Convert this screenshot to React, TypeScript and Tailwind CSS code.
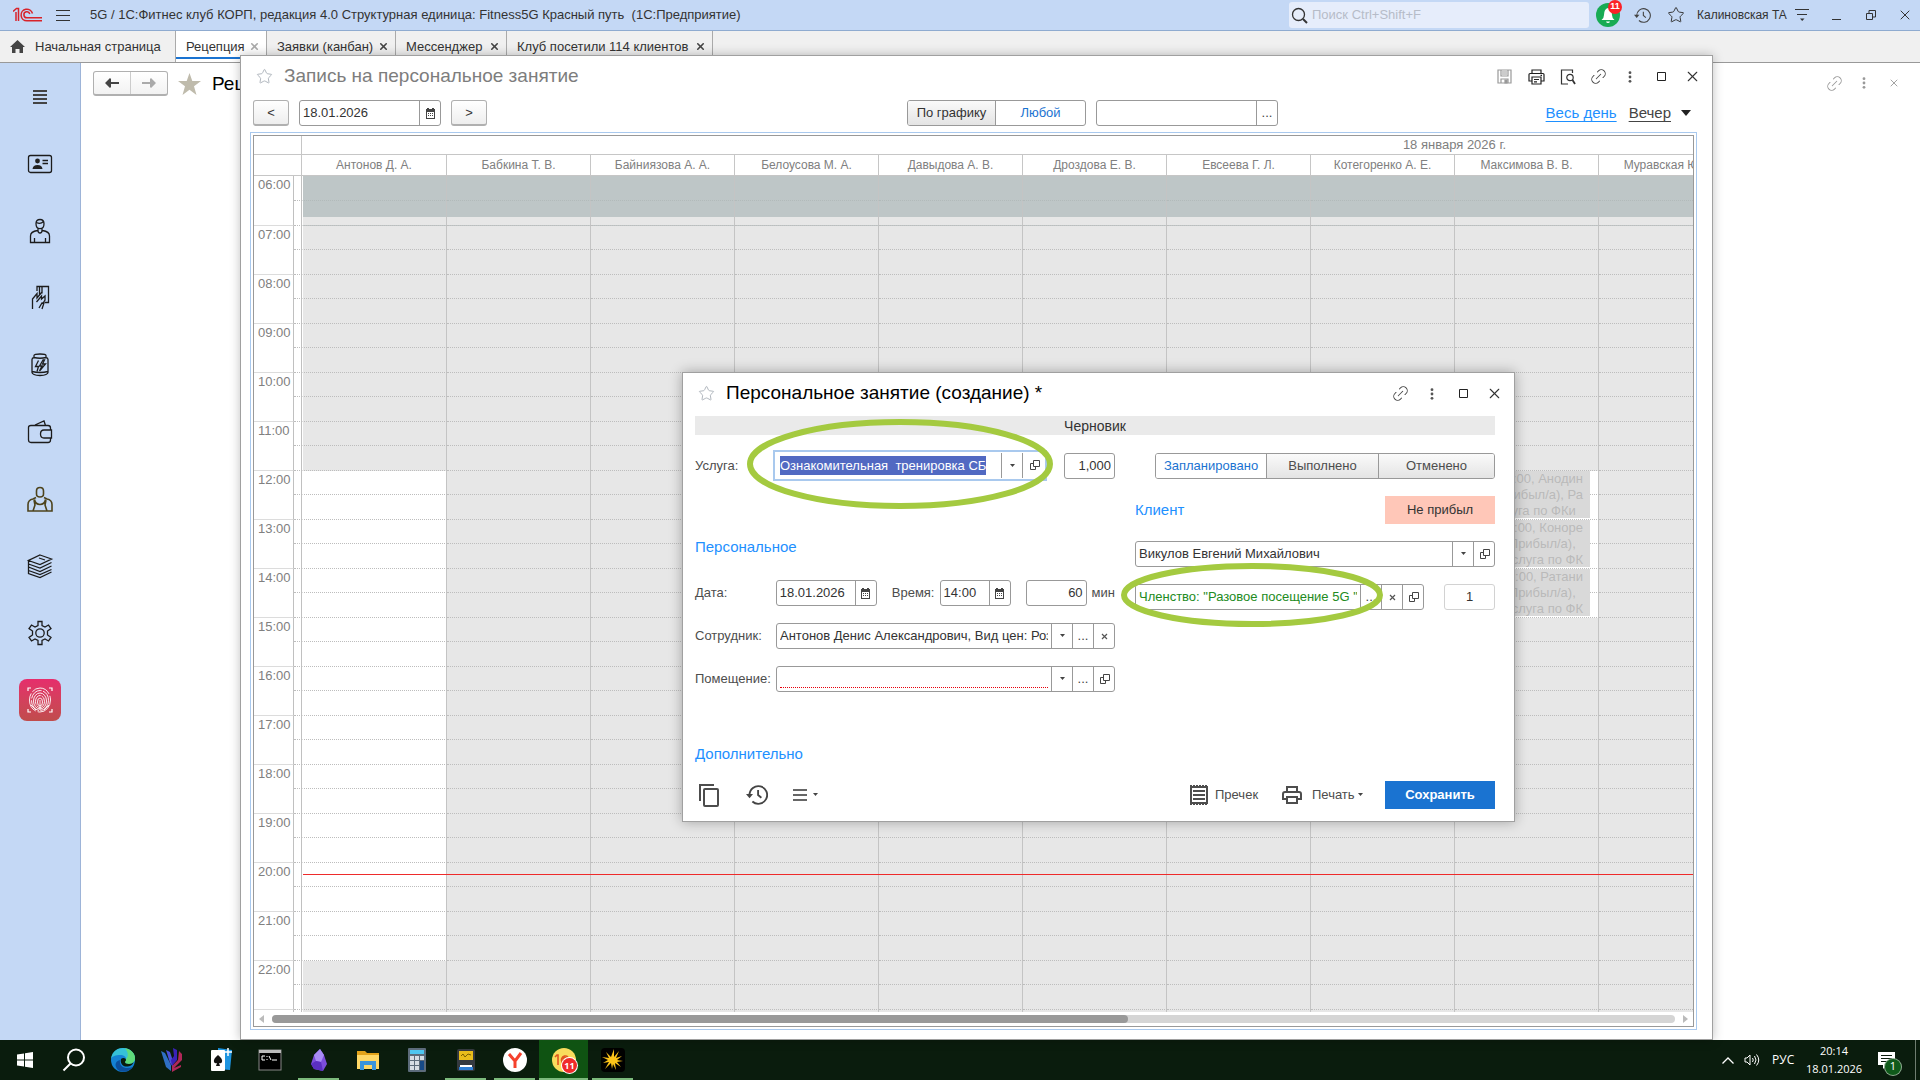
import { useEffect, useRef, useState } from 'react'
import type { ReactNode } from 'react'
import { Link2, Star, X } from 'lucide-react'

interface Visit {
  hour: number
  lines: string[]
}

const STAFF = [
  'Антонов Д. А.',
  'Бабкина Т. В.',
  'Байниязова А. А.',
  'Белоусова М. А.',
  'Давыдова А. В.',
  'Дроздова Е. В.',
  'Евсеева Г. Л.',
  'Котегоренко А. Е.',
  'Максимова В. В.',
  'Муравская Ю. А.',
  '',
  '',
  '',
  '',
  '',
  '',
]

const HOURS = Array.from({ length: 18 }, (_, i) => i + 6)

const VISITS: Visit[] = [
  { hour: 12, lines: ['12:00-13:00, Анодин', '(Прибыл/а), Ра', 'услуга по ФКи\u00a0\u00a0'] },
  { hour: 13, lines: ['13:00-14:00, Коноре', '(Прибыл/а),\u00a0\u00a0', 'услуга по ФК'] },
  { hour: 14, lines: ['14:00-15:00, Ратани', '(Прибыл/а),\u00a0\u00a0', 'услуга по ФК'] },
]

const TABS = [
  { title: 'Рецепция', active: true, width: 'w-[91px]' },
  { title: 'Заявки (канбан)', active: false, width: 'w-[129px]' },
  { title: 'Мессенджер', active: false, width: 'w-[111px]' },
  { title: 'Клуб посетили 114 клиентов', active: false, width: 'w-[206px]' },
]

/* ---------- icons ---------- */

function CalendarIcon() {
  return (
    <svg width="11" height="11" viewBox="0 0 11 11" fill="#444">
      <path d="M1 1h1V0h2v1h3V0h2v1h1v10H1zM2 4v6h7V4z" fillRule="evenodd" />
      <path d="M3 5h1v1H3zM5 5h1v1H5zM7 5h1v1H7zM3 7h1v1H3zM5 7h1v1H5zM7 7h1v1H7z" />
    </svg>
  )
}

function OpenIcon() {
  return (
    <svg width="11" height="11" viewBox="0 0 11 11" fill="none" stroke="#444">
      <path d="M4.500.5h6v6h-6z" />
      <path d="M4 3.500H1.500v6h5V7" />
    </svg>
  )
}

function Caret() {
  return (
    <svg width="7" height="4" viewBox="0 0 7 4" fill="#444">
      <path d="M1 0h5L3.500 3z" />
    </svg>
  )
}

function CrossIcon() {
  return (
    <svg width="7" height="7" viewBox="0 0 7 7" stroke="#555" strokeWidth="1.200">
      <path d="M1 1l5 5M6 1L1 6" />
    </svg>
  )
}

function DotsIcon({ color }: { color: string }) {
  return (
    <svg width="4" height="12" viewBox="0 0 4 12" fill={color}>
      <circle cx="2" cy="1.700" r="1.400" />
      <circle cx="2" cy="6" r="1.400" />
      <circle cx="2" cy="10.300" r="1.400" />
    </svg>
  )
}

function SquareIcon() {
  return (
    <svg width="10" height="10" viewBox="0 0 10 10" fill="none" stroke="#222">
      <path d="M.5.5h8v8h-8z" />
    </svg>
  )
}

function HistoryIcon({ size, stroke }: { size: number; stroke: number }) {
  return (
    <svg width={size} height={size} viewBox="0 0 20 20" fill="none" stroke="#444" strokeWidth={stroke}>
      <path d="M3.200 10a8 8 0 1 1 2.600 5.900" />
      <path d="M11 5.500V10l3 2.500" />
      <path d="M0 9.200h6.400L3.200 13z" fill="#444" stroke="none" />
    </svg>
  )
}

function Logo1C() {
  return (
    <svg width="30" height="16" viewBox="0 0 30 16" fill="none" stroke="#d8232a" strokeWidth="1.500">
      <path d="M0 4.500L3.500 1.500H5.500V14M3 5v9" />
      <path d="M19.500 6.500A5.800 5.800 0 1 0 14 13.800H29" />
      <path d="M16.800 7A3 3 0 1 0 14 10.800H29" />
    </svg>
  )
}

function PrinterIcon() {
  return (
    <svg width="17" height="16" viewBox="0 0 17 16" fill="none" stroke="#222" strokeWidth="1.200">
      <path d="M4 4V1h9v3M4 12H1V5.500Q1 4.500 2 4.500H15Q16 4.500 16 5.500V12H13" />
      <path d="M4 8h9v7H4zM6 10.500h5M6 12.800h3M12.500 6.300h1.500" />
    </svg>
  )
}

const sideIcons: { name: string; icon: ReactNode }[] = [
  {
    name: 'Меню',
    icon: <path d="M7 8h14M7 12h14M7 16h14M7 20h14" strokeWidth="2" stroke="#444" />,
  },
  {
    name: 'Карта клиента',
    icon: (
      <>
        <rect x="2.500" y="5.500" width="23" height="17" rx="2" />
        <circle cx="11.500" cy="11" r="2.400" fill="#222" stroke="none" />
        <path d="M6.500 19q.5-4 5-4t5 4z" fill="#222" stroke="none" />
        <path d="M16.500 10.500h5.500M16.500 13.500h5.500" />
      </>
    ),
  },
  {
    name: 'Клиенты',
    icon: (
      <>
        <path d="M10 6.500q0-4 4-4t4 4.200c0 3-1.500 5-4 5s-4-2-4-5.200zM10.500 5.500q4 2 7-1" />
        <path d="M12 11.500v2q0 2.500 2 2.500t2-2.500v-2M11.500 13.500Q4.500 14.500 4.500 19v6.500h19V19q0-4.500-7-5.500M8.500 25v-4M19.500 25v-4" />
      </>
    ),
  },
  {
    name: 'Продажа карт',
    icon: (
      <path d="M11 7V2.500h11.500v16H19M13.500 2.500v9M16 2.500v7M6.500 25V15L11 9.500V14l5-6M10.500 18l5-6v3l3.500-3v4l-2.500 4M13 24l3-5 2 0-2 6" />
    ),
  },
  {
    name: 'Товары',
    icon: (
      <>
        <path d="M6 8.500q0-1.500 2-2V4.500q0-1.500 6-1.500t6 1.500v2q2 .5 2 2v13q0 1-2 2-2 1-6 1t-6-1q-2-1-2-2zM8 6.500q6 1.500 12 0M6 20.500q8 2 16 0" />
        <path d="M12.500 9.500l-3 6h3l-1.500 5M17 9l-3.500 6H16l-2.500 5 6-7h-3l2-4z" />
      </>
    ),
  },
  {
    name: 'Касса',
    icon: (
      <path d="M5 7.500h17q2.500 0 2.500 2.500v2M24.500 19.500V22q0 2.500-2.500 2.500H5Q2.500 24.500 2.500 22V9.500Q2.500 7.500 5 7.500M9 7l9-4 1.500 4.500M25.500 12H18q-3.500 0-3.500 4t3.500 4h7.500z" />
    ),
  },
  {
    name: 'Сотрудники',
    icon: (
      <>
        <path d="M10.500 6q0-3.500 3.500-3.500T17.500 6v3q0 3-3.500 3t-3.500-3z" strokeWidth="1.600" stroke="#4d431c" />
        <path
          d="M10 12.500L7 14q-5 1-5 5.500V26h24v-6.500Q26 15 21 14l-3-1.500M8.500 14.500q1 5 5.500 5t5.500-5M8 15l1 5-2 6M20 15l-1 5 2 6"
          strokeWidth="1.600"
          stroke="#4d431c"
        />
      </>
    ),
  },
  {
    name: 'Отчеты',
    icon: (
      <path d="M14 3l11.500 4L14 12.500 2.500 8.500zM2.500 8.500v13l11.500 4 11.500-5.500M2.500 12l11.500 4L25.500 10.500M2.500 15l11.500 4.500L25.500 14M2.500 18.500l11.500 4L25.500 17.500M13 6l6 2" />
    ),
  },
  {
    name: 'Настройки',
    icon: (
      <>
        <path d="M12 2.500h4v4l3 1.500 3.500-2 2.500 3.500-3.500 2.500v4l3.500 2.500-2.500 3.500-3.500-2-3 1.500v4h-4v-4l-3-1.500-3.500 2L3 18.500 6.500 16v-4L3 9.500 5.500 6 9 8l3-1.500z" />
        <circle cx="14" cy="14" r="4.200" />
      </>
    ),
  },
]

function Fingerprint() {
  return (
    <button
      type="button"
      aria-label="Отпечаток"
      className="flex size-[42px] items-center justify-center rounded-lg bg-linear-to-b from-[#e62d6c] to-[#c04c4c]"
    >
      <svg width="26" height="26" viewBox="0 0 26 26" fill="none" stroke="#fff">
        <path d="M1 4V1h3M22 1h3v3M25 22v3h-3M4 25H1v-3" strokeWidth="1.200" />
        <g strokeWidth=".9">
          <ellipse cx="13" cy="13" rx="10.500" ry="12" strokeDasharray="20 2" />
          <ellipse cx="13" cy="13.500" rx="8.500" ry="10" strokeDasharray="14 1.500" />
          <ellipse cx="13" cy="14" rx="6.500" ry="8" />
          <ellipse cx="13" cy="14.500" rx="4.500" ry="6" strokeDasharray="12 1" />
          <ellipse cx="13" cy="15" rx="2.500" ry="4" />
          <path d="M13 13v10M4 18l5 5M22 18l-5 5" />
        </g>
      </svg>
    </button>
  )
}

/* ---------- small controls ---------- */

interface FieldProps {
  id: string
  label?: string
  value: string
  width: string
  buttons?: { name: string; icon: ReactNode }[]
  inputClass?: string
  borderClass?: string
}

function Field({ id, label, value, width, buttons = [], inputClass = '', borderClass = 'border-[#999]' }: FieldProps) {
  const [text, setText] = useState(value)
  return (
    <div className={`flex h-[26px] shrink-0 overflow-hidden rounded-[3px] border bg-white ${borderClass} ${width}`}>
      <input
        id={id}
        aria-label={label}
        value={text}
        onChange={(e) => setText(e.target.value)}
        className={`w-0 min-w-0 flex-1 px-[3px] outline-none ${inputClass}`}
      />
      {buttons.map((b) => (
        <button
          key={b.name}
          type="button"
          aria-label={b.name}
          className="flex w-[21px] items-center justify-center border-l border-[#999] text-[#444]"
        >
          {b.icon}
        </button>
      ))}
    </div>
  )
}

const calendarBtn = { name: 'Календарь', icon: <CalendarIcon /> }
const caretBtn = { name: 'Показать список', icon: <Caret /> }
const pickBtn = { name: 'Выбрать', icon: <span>...</span> }
const clearBtn = { name: 'Очистить', icon: <CrossIcon /> }
const openBtn = { name: 'Открыть', icon: <OpenIcon /> }

function WindowButtons() {
  return (
    <>
      <button type="button" aria-label="Ссылка" className="flex w-[31px] justify-center">
        <Link2 size={19} strokeWidth={1.2} color="#444" className="-rotate-45" />
      </button>
      <button type="button" aria-label="Ещё" className="flex w-8 justify-center">
        <DotsIcon color="#555" />
      </button>
      <button type="button" aria-label="Развернуть" className="flex w-[31px] justify-center">
        <SquareIcon />
      </button>
      <button type="button" aria-label="Закрыть" className="flex w-[31px] justify-center">
        <X size={17} strokeWidth={1.5} color="#333" />
      </button>
    </>
  )
}

/* ---------- page parts ---------- */

function TitleBar() {
  return (
    <header className="flex h-[31px] shrink-0 items-center border-b border-[#8fabd0] bg-[#c4d8f5] text-[#333]">
      <div className="flex w-[90px] items-center gap-[13px] pl-[13px]">
        <Logo1C />
        <svg width="14" height="13" viewBox="0 0 14 13" stroke="#333" strokeWidth="1.200">
          <path d="M0 1.500h14M0 6.500h14M0 11.500h14" />
        </svg>
      </div>
      <div className="whitespace-pre text-[13px]">
        5G / 1С:Фитнес клуб КОРП, редакция 4.0 Структурная единица: Fitness5G Красный путь{'  '}(1С:Предприятие)
      </div>
      <div className="ml-auto flex h-[26px] w-[300px] items-center gap-1 rounded-[3px] bg-[#e6edfb] px-[2px]">
        <svg width="17" height="17" viewBox="0 0 17 17" fill="none" stroke="#333" strokeWidth="1.300">
          <circle cx="7.500" cy="7.500" r="6" />
          <path d="M12 12l4 4" strokeWidth="2" />
        </svg>
        <input
          aria-label="Поиск"
          placeholder="Поиск Ctrl+Shift+F"
          className="flex-1 text-[13px] outline-none placeholder:text-[#b6bcc8]"
        />
      </div>
      <button type="button" aria-label="Уведомления" className="relative ml-[7px] size-6 rounded-full bg-[#18ab54]">
        <svg width="24" height="24" viewBox="0 0 24 24" fill="#fff">
          <path d="M12 5q4 1 4 7 0 3 2.500 5h-13Q8 15 8 12q0-6 4-7zM10 18.500h4q-.5 1.500-2 1.500t-2-1.500z" />
        </svg>
        <span className="absolute -top-[3px] left-3 flex size-[14px] items-center justify-center rounded-full bg-[#fb2127] text-[9px] font-bold text-white">
          11
        </span>
      </button>
      <button type="button" aria-label="История" className="ml-3.5">
        <HistoryIcon size={17} stroke={1.3} />
      </button>
      <button type="button" aria-label="Избранное" className="ml-4">
        <Star size={18} strokeWidth={1.3} />
      </button>
      <span className="ml-3 w-[85px] text-[12px] whitespace-nowrap">Калиновская ТА</span>
      <button type="button" aria-label="Настройка" className="ml-3">
        <svg width="16" height="14" viewBox="0 0 16 14" stroke="#333" strokeWidth="1.200">
          <path d="M1 1.500h14M3 6.500h10" />
          <path d="M6 10.500h4.500L8.200 13z" fill="#333" stroke="none" />
        </svg>
      </button>
      <button type="button" aria-label="Свернуть" className="ml-[22px] h-[10px] w-[9px] border-b border-[#333]" />
      <button type="button" aria-label="Восстановить" className="ml-[25px]">
        <svg width="10" height="10" viewBox="0 0 10 10" fill="none" stroke="#333">
          <path d="M.5 3.500h6v6h-6zM3 3V.5h6.500V7H7" />
        </svg>
      </button>
      <button type="button" aria-label="Закрыть" className="mr-[7px] ml-[21px]">
        <X size={16} strokeWidth={1.5} />
      </button>
    </header>
  )
}

function Tabs() {
  return (
    <nav className="flex h-8 shrink-0 border-b border-[#999] bg-[#f0f0f0] text-[13px] text-[#333]">
      <button type="button" className="flex w-[176px] items-center gap-2.5 border-r border-[#aaa] pl-2.5 whitespace-nowrap">
        <svg width="15" height="14" viewBox="0 0 15 14" fill="#444">
          <path d="M7.500 0L15 7h-2v6H9.500V9h-4v4H2V7H0z" />
        </svg>
        Начальная страница
      </button>
      {TABS.map((t) => (
        <div
          key={t.title}
          className={`flex items-center justify-between border-r border-[#aaa] pr-[6px] pl-2.5 whitespace-nowrap ${t.width} ${
            t.active ? 'bg-white shadow-[inset_0_-3px_0_#fff,inset_0_-5px_0_#1a73d1]' : ''
          }`}
        >
          <button type="button">{t.title}</button>
          <button type="button" aria-label="Закрыть вкладку">
            <X size={11} strokeWidth={3.5} color={t.active ? '#aaa' : '#444'} />
          </button>
        </div>
      ))}
    </nav>
  )
}

function Sidebar() {
  return (
    <aside className="flex w-[81px] shrink-0 flex-col items-center gap-[39px] border-r border-[#9db4d8] bg-[#c4d8f5] pt-5">
      {sideIcons.map((s) => (
        <button key={s.name} type="button" aria-label={s.name}>
          <svg width="28" height="28" viewBox="0 0 28 28" fill="none" stroke="#1c1c1c" strokeWidth="1.300">
            {s.icon}
          </svg>
        </button>
      ))}
      <div className="-mt-[7px]">
        <Fingerprint />
      </div>
    </aside>
  )
}

function cellTone(col: number, hour: number, half: number) {
  if (hour === 6) {
    return half === 0
      ? 'bg-[#bec6c7] border-b-[#b2baba]'
      : 'bg-[linear-gradient(#bec6c7_16px,#e7e7e7_16px)] border-b-[#bdbdbd]'
  }
  if (col === 0 && hour >= 12 && hour < 22) return 'bg-white border-b-[#bdbdbd]'
  if (col === 8 && hour >= 12 && hour < 15) return 'bg-white border-b-[#bdbdbd]'
  return 'bg-[#e7e7e7] border-b-[#bdbdbd]'
}

function Schedule() {
  return (
    <div className="mt-1 mr-[15px] mb-[9px] ml-[9px] flex min-h-0 flex-1 border border-[#a9c9ee] p-[2px]">
      <div className="relative flex min-h-0 w-0 flex-1 flex-col border border-[#999]">
        <div className="min-h-0 flex-1 overflow-hidden">
          <table className="w-[2353px] table-fixed border-separate border-spacing-0 text-[#808080]">
            <colgroup>
              <col className="w-[40px]" />
              <col className="w-[8px]" />
              <col className="w-[145px]" />
              {STAFF.slice(1).map((_, i) => (
                <col key={i} className="w-[144px]" />
              ))}
            </colgroup>
            <thead className="text-[12px]">
              <tr className="h-[19px]">
                <th colSpan={2} className="border-r border-b border-[#c6c6c6] p-0" />
                <th colSpan={16} className="border-b border-[#c6c6c6] p-0 text-[13px] leading-[18px] font-normal">
                  18 января 2026 г.
                </th>
              </tr>
              <tr className="h-[21px]">
                <th colSpan={2} className="border-r border-b border-[#c6c6c6] p-0" />
                {STAFF.map((name, i) => (
                  <th key={i} className="border-r border-b border-[#c6c6c6] p-0 leading-5 font-normal">
                    {name}
                  </th>
                ))}
              </tr>
            </thead>
            <tbody>
              {HOURS.map((hour) =>
                [0, 1].map((half) => (
                  <tr key={`${hour}-${half}`} className={half === 0 && hour !== 6 ? 'h-[24px]' : 'h-[25px]'}>
                    {half === 0 && (
                      <th
                        rowSpan={2}
                        className="border-r border-b border-r-[#c0c0c0] border-b-[#dcdcdc] p-0 pt-px pl-1 text-left align-top text-[13px] leading-4 font-normal"
                      >
                        {hour < 23 && `${String(hour).padStart(2, '0')}:00`}
                      </th>
                    )}
                    <td className="border-r border-b border-r-[#c0c0c0] border-b-[#bdbdbd] p-0 [border-bottom-style:dotted]" />
                    {STAFF.map((_, col) => (
                      <td
                        key={col}
                        className={`relative border-r border-b border-r-[#c4c4c4] p-0 [border-bottom-style:dotted] ${
                          col === 0 ? 'border-l border-l-white' : ''
                        } ${cellTone(col, hour, half)}`}
                      >
                        {col === 8 &&
                          half === 0 &&
                          VISITS.filter((v) => v.hour === hour).map((v) => (
                            <div
                              key={v.hour}
                              className="absolute top-0 left-0 z-10 h-[47px] w-[135px] overflow-hidden bg-[#d9d9d9] pr-[7px] text-right text-[13px] leading-4 whitespace-nowrap text-[#bababa]"
                            >
                              {v.lines.map((l) => (
                                <div key={l}>{l}</div>
                              ))}
                            </div>
                          ))}
                      </td>
                    ))}
                  </tr>
                ))
              )}
            </tbody>
          </table>
        </div>
        {/* current time */}
        <div className="absolute top-[738px] right-0 left-[49px] h-px bg-[#ee2b2b]" />
        <div className="flex h-[14px] shrink-0 items-center gap-2 px-[5px]">
          <svg width="5" height="8" viewBox="0 0 5 8" fill="#bbb">
            <path d="M5 0v8L0 4z" />
          </svg>
          <div className="h-2 flex-1 rounded-full bg-[#d5d5d5]">
            <div className="h-2 w-[61%] rounded-full bg-[#999]" />
          </div>
          <svg width="5" height="8" viewBox="0 0 5 8" fill="#bbb">
            <path d="M0 0v8l5-4z" />
          </svg>
        </div>
      </div>
    </div>
  )
}

function BookingWindow() {
  return (
    <section className="absolute top-6 right-[207px] bottom-0 left-60 isolate flex flex-col border border-[#a0a0a0] bg-white shadow-[0_0_10px_rgba(0,0,0,0.25)]">
      <div className="flex h-[41px] shrink-0 items-center pr-1 pl-[15px]">
        <Star size={17} strokeWidth={1.3} color="#aab0b8" />
        <h2 className="ml-[11px] text-[19px] text-[#7d7d7d]">Запись на персональное занятие</h2>
        <button type="button" aria-label="Сохранить" className="ml-auto flex w-8 justify-center">
          <svg width="15" height="15" viewBox="0 0 15 15" fill="none" stroke="#999" strokeWidth="1.200">
            <path d="M1 1h13v13H1zM4 1v6h7V1M5 3h5M5 5h5M4 14v-4h7v4" />
            <path d="M8 11h2v3H8z" fill="#999" />
          </svg>
        </button>
        <button type="button" aria-label="Печать" className="flex w-8 justify-center">
          <PrinterIcon />
        </button>
        <button type="button" aria-label="Просмотр" className="flex w-[31px] justify-center">
          <svg width="16" height="16" viewBox="0 0 16 16" fill="none" stroke="#333" strokeWidth="1.200">
            <path d="M12.500 4V1h-11v14H8" />
            <circle cx="10" cy="8.500" r="3.200" />
            <path d="M12.500 11l2.500 4" strokeWidth="1.800" />
          </svg>
        </button>
        <WindowButtons />
      </div>
      <div className="flex h-8 shrink-0 items-center gap-2.5 pr-[21px] pl-3 text-[13px] text-[#333]">
        <button
          type="button"
          aria-label="Предыдущий день"
          className="h-[26px] w-9 rounded-[3px] border border-b-2 border-[#b0b0b0] bg-linear-to-b from-white to-[#eee]"
        >
          &lt;
        </button>
        <Field id="day" label="Дата записи" value="18.01.2026" width="w-[142px]" buttons={[calendarBtn]} />
        <button
          type="button"
          aria-label="Следующий день"
          className="h-[26px] w-9 rounded-[3px] border border-b-2 border-[#b0b0b0] bg-linear-to-b from-white to-[#eee]"
        >
          &gt;
        </button>
        <div className="ml-[410px] flex h-[26px] w-[179px] overflow-hidden rounded-[3px] border border-[#999]">
          <button type="button" className="w-[88px] border-r border-[#999] bg-linear-to-b from-[#fafafa] to-[#e4e4e4]">
            По графику
          </button>
          <button type="button" className="flex-1 text-[#1a73d1]">
            Любой
          </button>
        </div>
        <Field id="filter" label="Отбор" value="" width="w-[182px]" buttons={[pickBtn]} />
        <div className="ml-auto flex items-center text-[15px]">
          <a href="#day" className="text-[#1e90ff] underline underline-offset-3">
            Весь день
          </a>
          <a href="#evening" className="ml-3 text-[#444] underline underline-offset-3">
            Вечер
          </a>
          <svg width="10" height="6" viewBox="0 0 10 6" className="ml-2.5" fill="#222">
            <path d="M0 0h10L5 6z" />
          </svg>
        </div>
      </div>
      <div className="-mt-px flex min-h-0 flex-1">
        <Schedule />
      </div>
    </section>
  )
}

function ServiceField() {
  const [service, setService] = useState('Ознакомительная  тренировка СБ')
  const ref = useRef<HTMLInputElement>(null)

  useEffect(() => {
    ref.current?.focus()
    ref.current?.select()
  }, [])

  return (
    <div className="flex h-[31px] w-[274px] border-2 border-[#a9c9ee] bg-white py-px">
      <input
        id="service"
        ref={ref}
        value={service}
        onChange={(e) => setService(e.target.value)}
        className="w-0 flex-1 pl-[5px] outline-none selection:bg-[#5169c2] selection:text-white"
      />
      <button
        type="button"
        aria-label="Показать список"
        className="flex w-[21px] items-center justify-center border-l border-[#999]"
      >
        <Caret />
      </button>
      <button
        type="button"
        aria-label="Открыть"
        className="flex w-[23px] items-center justify-center border-l border-[#999]"
      >
        <OpenIcon />
      </button>
    </div>
  )
}

function Mark({ className, w, h }: { className: string; w: number; h: number }) {
  return (
    <svg className={`pointer-events-none absolute ${className}`} width={w} height={h} fill="none">
      <ellipse cx={w / 2} cy={h / 2} rx={w / 2 - 3} ry={h / 2 - 3} stroke="#a4ca40" strokeWidth="6" />
    </svg>
  )
}

function SessionDialog() {
  const [status, setStatus] = useState('Запланировано')
  const statuses = [
    { name: 'Запланировано', width: 'w-[110px]' },
    { name: 'Выполнено', width: 'w-[112px] border-l' },
    { name: 'Отменено', width: 'flex-1 border-l' },
  ]

  return (
    <form className="absolute top-[341px] left-[682px] w-[833px] border border-[#a0a0a0] bg-white pr-[19px] pb-3 pl-3 text-[13px] text-[#4d4d4d] shadow-[0_0_12px_rgba(0,0,0,0.3)]">
      <div className="-mr-[15px] flex h-[41px] items-center">
        <Star size={17} strokeWidth={1.3} color="#aab0b8" className="ml-[3px]" />
        <h2 className="mr-auto ml-[11px] text-[19px] text-black">Персональное занятие (создание) *</h2>
        <WindowButtons />
      </div>
      <div className="mt-[2px] h-[19px] bg-[#eaeaea] text-center text-[14px] leading-5 text-[#333]">Черновик</div>

      <div className="mt-[15px] flex h-[31px] items-center">
        <label htmlFor="service" className="w-[78px]">
          Услуга:
        </label>
        <div className="text-[#333]">
          <ServiceField />
        </div>
        <div className="ml-[17px] text-[#333]">
          <Field id="count" label="Количество" value="1,000" width="w-[51px]" inputClass="text-right" />
        </div>
        <div className="ml-auto flex h-[26px] w-[340px] overflow-hidden rounded-[3px] border border-[#999]">
          {statuses.map((s) => (
            <button
              key={s.name}
              type="button"
              onClick={() => setStatus(s.name)}
              className={`border-[#999] ${s.width} ${
                status === s.name ? 'bg-white text-[#1a73d1]' : 'bg-linear-to-b from-[#fafafa] to-[#e4e4e4]'
              }`}
            >
              {s.name}
            </button>
          ))}
        </div>
      </div>

      <div className="flex gap-5">
        <div className="w-[420px]">
          <h3 className="mt-[54px] text-[15px] leading-6 text-[#1e90ff]">Персональное</h3>
          <div className="mt-[21px] flex items-center">
            <label htmlFor="date" className="w-[81px]">
              Дата:
            </label>
            <Field id="date" value="18.01.2026" width="w-[101px]" buttons={[calendarBtn]} inputClass="text-[#333]" />
            <label htmlFor="time" className="ml-[15px] w-12">
              Время:
            </label>
            <Field id="time" value="14:00" width="w-[71px]" buttons={[calendarBtn]} inputClass="text-[#333]" />
            <div className="ml-[15px]">
              <Field id="duration" value="60" width="w-[61px]" inputClass="text-right text-[#333]" />
            </div>
            <label htmlFor="duration" className="ml-[5px]">
              мин
            </label>
          </div>
          <div className="mt-[17px] flex items-center">
            <label htmlFor="employee" className="w-[81px]">
              Сотрудник:
            </label>
            <Field
              id="employee"
              value="Антонов Денис Александрович, Вид цен: Розничная"
              width="w-[339px]"
              buttons={[caretBtn, pickBtn, clearBtn]}
              inputClass="text-[#333]"
            />
          </div>
          <div className="mt-[17px] flex items-center">
            <label htmlFor="room" className="w-[81px]">
              Помещение:
            </label>
            <Field
              id="room"
              value=""
              width="w-[339px]"
              buttons={[caretBtn, pickBtn, openBtn]}
              inputClass="mx-[3px] mb-[3px] border-b border-dotted border-red-600"
            />
          </div>
          <h3 className="mt-[50px] text-[15px] leading-6 text-[#1e90ff]">Дополнительно</h3>
        </div>

        <div className="flex-1">
          <div className="mt-[15px] flex h-7 items-center justify-between">
            <h3 className="text-[15px] text-[#1e90ff]">Клиент</h3>
            <button type="button" className="h-7 w-[110px] bg-[#ffc7b8] text-[#333]">
              Не прибыл
            </button>
          </div>
          <div className="mt-[17px]">
            <Field
              id="client"
              label="Клиент"
              value="Викулов Евгений Михайлович"
              width="w-full"
              buttons={[caretBtn, openBtn]}
              inputClass="text-[#333]"
            />
          </div>
          <div className="mt-[17px] flex justify-between">
            <Field
              id="membership"
              label="Членство"
              value={'Членство: "Разовое посещение 5G "'}
              width="w-[289px]"
              buttons={[pickBtn, clearBtn, openBtn]}
              inputClass="text-[#228b22]"
            />
            <Field
              id="visits"
              label="Посещений"
              value="1"
              width="w-[51px]"
              borderClass="border-[#d2d2d2]"
              inputClass="text-center text-[#333]"
            />
          </div>
        </div>
      </div>

      <div className="mt-[15px] flex h-7 items-center">
        <button type="button" aria-label="Скопировать" className="ml-1">
          <svg width="20" height="23" viewBox="0 0 20 23" fill="none" stroke="#4d4d4d" strokeWidth="2">
            <path d="M15 1H1v16" />
            <rect x="5" y="5" width="14" height="17" rx="1" />
          </svg>
        </button>
        <button type="button" aria-label="История" className="ml-[27px]">
          <HistoryIcon size={22} stroke={1.7} />
        </button>
        <button type="button" aria-label="Команды" className="ml-[25px] flex items-center gap-1">
          <svg width="15" height="12" viewBox="0 0 15 12" stroke="#666" strokeWidth="2">
            <path d="M0 1h14M0 6h14M0 11h14" />
          </svg>
          <Caret />
        </button>
        <button type="button" className="ml-auto flex w-[92px] items-center gap-[7px]">
          <svg width="18" height="20" viewBox="0 0 18 20" fill="none" stroke="#4d4d4d" strokeWidth="2">
            <path d="M1 2v16M17 2v16M3 6h12M3 10h12M3 14h12" />
            <path d="M0 2h18M0 18h18" />
            <path d="M0 .5h18M0 19.500h18" strokeDasharray="2 1" strokeWidth="1" />
          </svg>
          Пречек
        </button>
        <button type="button" className="mr-[21px] flex w-[82px] items-center">
          <svg width="20" height="18" viewBox="0 0 20 18" fill="none" stroke="#4d4d4d" strokeWidth="2" className="mr-2.5 shrink-0">
            <path d="M5 5V1h10v4M5 13H1V8q0-2 2-2h14q2 0 2 2v5h-4" />
            <path d="M5 11h10v6H5z" />
          </svg>
          Печать
          <span className="ml-[2px]">
            <Caret />
          </span>
        </button>
        <button type="button" className="h-7 w-[110px] bg-[#1a73d1] font-bold text-white">
          Сохранить
        </button>
      </div>

      <Mark className="top-[46px] left-16" w={306} h={90} />
      <Mark className="top-[190px] left-[438px]" w={262} h={64} />
    </form>
  )
}

const apps: { name: string; state: string; icon: ReactNode }[] = [
  { name: 'Пуск', state: '', icon: <path d="M4 6.500l7-1v6H4zM12 5.300l8-1.300v7.500h-8zM4 12.500h7v6l-7-1zM12 12.500h8V20l-8-1.300z" fill="#fff" /> },
  {
    name: 'Поиск',
    state: '',
    icon: (
      <g fill="none" stroke="#fff" strokeWidth="2">
        <circle cx="14" cy="9.500" r="8" />
        <path d="M8.500 15.500L1.500 22.500" />
      </g>
    ),
  },
  {
    name: 'Edge',
    state: '',
    icon: (
      <>
        <circle cx="12" cy="12" r="12" fill="#1482d4" />
        <path d="M0 11C1 3 7 0 12 0c7 0 12 5 12 10 0 4-3 6-6 6s-4-1-4-2c0-1 1-1 1-3s-2-4-6-4-8 1-9 4z" fill="#35c1d8" />
        <path d="M14 .2C20 1 24 5.500 24 10c0 4-3 6-6 6s-4-1-4-2c0-1 1-1 1-3 3-3 2-7-1-10.800z" fill="#5fdb7a" />
        <path d="M9 12c-1 6 4 10 13 7-4 5-11 6-15 3-4-4-3-9 2-10z" fill="#0c4f9c" />
        <path d="M10 11c2-2 5-1 5 1 0 1-1 1-1 2s1 2 4 2c2 0 4-1 4.500-2-1 4-5 5-8 4.500S9 15 10 11z" fill="#0a1c0d" />
      </>
    ),
  },
  {
    name: 'VisualVM',
    state: '',
    icon: (
      <>
        <path d="M1 3l4 2 6 12v6L6 19z" fill="#2f6fc4" />
        <path d="M6 2l4 2 3 9v6l-3-4z" fill="#4a50d8" />
        <path d="M13 0l4 2v10l-5 6-1-6 3-4z" fill="#3a22b8" />
        <path d="M19 3l3 3v6l-8 8 7-3v2l-9 5v-6l6-6z" fill="#b02858" />
      </>
    ),
  },
  {
    name: 'Пасьянс',
    state: '',
    icon: (
      <>
        <path d="M9 0l14 2-2 20-12-1z" fill="#1d94e0" />
        <rect x="2" y="2" width="14" height="21" rx="1" fill="#fff" />
        <path d="M9 7q5 4 4 7-1 2-3 1l1 3H7l1-3q-2 1-3-1-1-3 4-7z" fill="#111" />
        <path d="M19 0v8M15 4h8" stroke="#fff" strokeWidth="1.500" />
      </>
    ),
  },
  {
    name: 'Командная строка',
    state: '',
    icon: (
      <>
        <rect x="1" y="2" width="22" height="20" fill="#000" stroke="#888" />
        <path d="M1 2h22v3H1z" fill="#bbb" />
        <path d="M7 8H4v4h3M9 8v1M9 11v1M11 8l2 4M14 12h5" stroke="#fff" fill="none" />
      </>
    ),
  },
  {
    name: 'Obsidian',
    state: 'open',
    icon: (
      <>
        <path d="M13 1l4 6 3 9-4 7-9-2-3-5 3-9z" fill="#7c4ddb" />
        <path d="M13 1L7 7l2 6 5 1 3-7z" fill="#a88bf5" />
        <path d="M9 13l-5 3 3 5 9 2-2-9z" fill="#5a2fc0" />
      </>
    ),
  },
  {
    name: 'Проводник',
    state: '',
    icon: (
      <>
        <path d="M1 3h8l2 2h12v16H1z" fill="#e2a21a" />
        <path d="M1 7h22v14H1z" fill="#ffd766" />
        <path d="M4 13h16v9h-4v-5H8v5H4z" fill="#3b94dc" />
      </>
    ),
  },
  {
    name: 'Калькулятор',
    state: '',
    icon: (
      <>
        <rect x="3" y="0" width="18" height="24" rx="1" fill="#5c6b7a" />
        <path d="M5 2h14v4H5z" fill="#4ec6f0" />
        <path d="M5 8h4v4H5zM10 8h4v4h-4zM15 8h4v4h-4zM5 13h4v4H5zM10 13h4v4h-4zM5 18h4v4H5zM10 18h4v4h-4z" fill="#d6dde4" />
        <path d="M15 13h4v9h-4z" fill="#174a86" />
      </>
    ),
  },
  {
    name: 'Терминал',
    state: 'open',
    icon: (
      <>
        <rect x="3" y="1" width="18" height="22" rx="2" fill="#34393f" />
        <path d="M5 3h14v9H5z" fill="#e8bd1b" />
        <path d="M7 8l2-2 2 3 3-3 3 1" stroke="#7a6100" fill="none" />
        <path d="M6 17h12v2H6z" fill="#fff" />
        <path d="M5 19h14v3H5z" fill="#2f7fd4" />
      </>
    ),
  },
  {
    name: 'Яндекс Браузер',
    state: 'open',
    icon: (
      <>
        <circle cx="12" cy="12" r="12" fill="#fff" />
        <path d="M6 6l6 7v7M12 13l6-8" stroke="#f5412d" strokeWidth="3" fill="none" />
      </>
    ),
  },
  {
    name: '1С:Предприятие',
    state: 'active',
    icon: (
      <>
        <circle cx="12" cy="12" r="12" fill="#f9dc5c" />
        <path d="M3 9l2-2h1v10M16 9a4 4 0 1 0-3 7h5M14.500 10a2 2 0 1 0-1.500 3.500h4" stroke="#e0541e" strokeWidth="1.600" fill="none" />
      </>
    ),
  },
  {
    name: 'Искра',
    state: 'open',
    icon: (
      <>
        <rect width="24" height="24" rx="4" fill="#000" />
        <path
          d="M13 1l0 8 5-6-3 7 6-2-5 4 6 1-6 1 4 5-6-4 1 7-3-6-1 5-1-6-6 6 4-7-6 1 5-3-6-3 7 1-3-6 5 5z"
          fill="#fcc419"
        />
      </>
    ),
  },
]

function Taskbar() {
  return (
    <footer className="flex h-10 shrink-0 bg-[#0a1c0d] text-white [font-family:'Open_Sans','Noto_Sans',sans-serif]">
      {apps.map((a) => (
        <button
          key={a.name}
          type="button"
          aria-label={a.name}
          className={`relative flex w-[49px] items-center justify-center ${a.state === 'active' ? 'bg-[#0f5312]' : ''}`}
        >
          <svg width="24" height="24" viewBox="0 0 24 24">
            {a.icon}
          </svg>
          {a.state === 'active' && (
            <span className="absolute top-[18px] left-[23px] flex size-[15px] items-center justify-center rounded-full bg-[#f02a2a] text-[9px] font-bold ring-1 ring-white">
              11
            </span>
          )}
          {a.state !== '' && (
            <span
              className={`absolute bottom-0 h-[2px] bg-[#7cba7c] ${a.state === 'active' ? 'inset-x-0' : 'inset-x-1'}`}
            />
          )}
        </button>
      ))}
      <div className="ml-auto flex items-center text-[12px]">
        <svg width="12" height="7" viewBox="0 0 12 7" fill="none" stroke="#fff" strokeWidth="1.300">
          <path d="M.5 6.500L6 1l5.500 5.500" />
        </svg>
        <svg width="17" height="14" viewBox="0 0 17 14" fill="none" stroke="#fff" className="ml-[10px]">
          <path d="M1 5h2l3-3v10L3 9H1zM8.500 5q1.500 2 0 4M10.500 3q3 4 0 8M12.500 1.500q4.500 5.500 0 11" />
        </svg>
        <span className="ml-[11px] w-[34px]">РУС</span>
        <div className="w-[56px] text-center text-[11px] leading-[18px]">
          <div>20:14</div>
          <div>18.01.2026</div>
        </div>
        <button type="button" aria-label="Уведомления" className="relative ml-[16px]">
          <svg width="17" height="17" viewBox="0 0 17 17" fill="#fff">
            <path d="M0 0h17v13H9l-4 4v-4H0z" />
            <path d="M3 3.500h11M3 6.500h11M3 9.500h7" stroke="#0a1c0d" />
          </svg>
          <span className="absolute top-[7px] left-[7px] flex size-4 items-center justify-center rounded-full bg-[#0f5a1a] text-[11px] ring-1 ring-[#8fae92]">
            1
          </span>
        </button>
        <div className="mr-1 ml-[20px] h-10 w-px bg-[#6f7d70]" />
      </div>
    </footer>
  )
}

export default function App() {
  return (
    <div className="flex h-screen flex-col overflow-hidden bg-white [font-family:'Liberation_Sans',Arial,sans-serif]">
      <TitleBar />
      <div className="relative flex min-h-0 flex-1 flex-col">
        <Tabs />
        <div className="flex min-h-0 flex-1">
          <Sidebar />
          <main className="flex flex-1 items-start justify-between pt-2 pr-5 pl-3">
            <div className="flex items-center">
              <div className="flex h-[25px] w-[75px] rounded-[3px] border border-b-2 border-[#b0b0b0] bg-linear-to-b from-white to-[#f2f2f2]">
                <button type="button" aria-label="Назад" className="flex flex-1 items-center justify-center border-r border-[#ccc]">
                  <svg width="14" height="10" viewBox="0 0 14 10" fill="#444">
                    <path d="M0 5l5-5 1 1v3h8v2H6v3l-1 1z" />
                  </svg>
                </button>
                <button type="button" aria-label="Вперед" className="flex flex-1 items-center justify-center">
                  <svg width="14" height="10" viewBox="0 0 14 10" fill="#aaa">
                    <path d="M14 5L9 0 8 1v3H0v2h8v3l1 1z" />
                  </svg>
                </button>
              </div>
              <svg width="23" height="22" viewBox="0 0 23 22" className="ml-[10px]" fill="#bfbbac">
                <path d="M11.500 0l2.800 8H23l-7 5.200L18.500 22l-7-5.200L4.500 22 7 13.200 0 8h8.700z" />
              </svg>
              <h1 className="ml-[11px] text-[19px] leading-6 text-black">Рецепция</h1>
            </div>
            <div className="flex h-6 items-center text-[#999]">
              <Link2 size={19} strokeWidth={1.2} className="-rotate-45" />
              <span className="ml-[18px]">
                <DotsIcon color="#999" />
              </span>
              <X size={12} strokeWidth={1.8} className="ml-[22px]" />
            </div>
          </main>
        </div>
        <BookingWindow />
        <SessionDialog />
      </div>
      <Taskbar />
    </div>
  )
}
